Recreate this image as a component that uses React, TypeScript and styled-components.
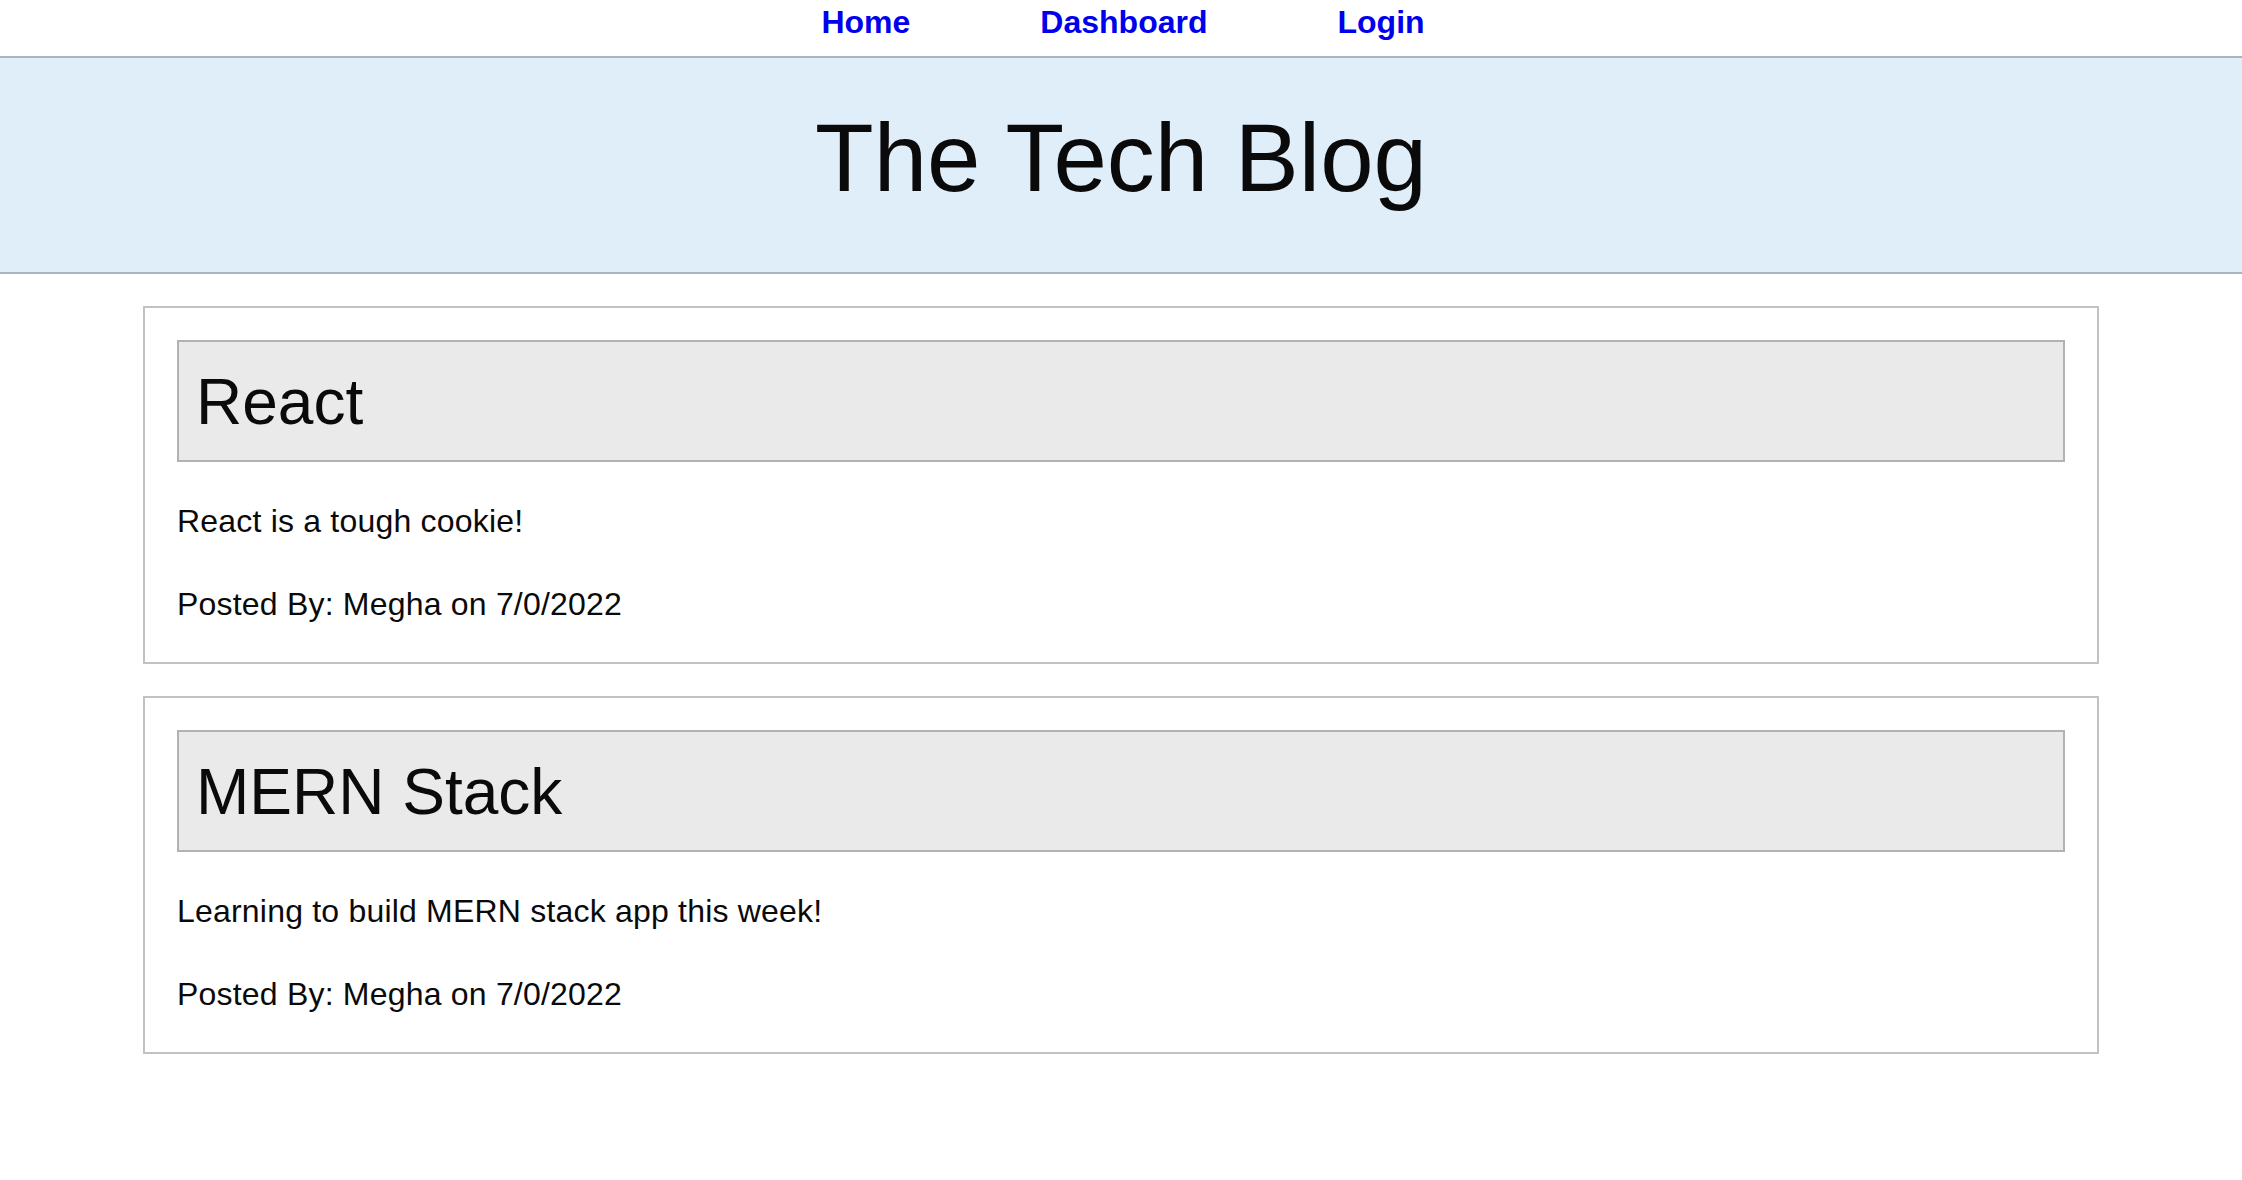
import React from "react";
import styled, { createGlobalStyle } from "styled-components";

const GlobalStyle = createGlobalStyle`
  html, body {
    margin: 0;
    padding: 0;
    background: #ffffff;
  }
  body {
    font-family: "Liberation Sans", Arial, Helvetica, sans-serif;
    color: #0a0a0a;
  }
  * { box-sizing: border-box; }
`;

const Page = styled.div`
  display: flex;
  flex-direction: column;
  min-height: 1180px;
`;

const Nav = styled.nav`
  height: 56px;
  padding-top: 4px;
  padding-left: 4px;
  display: flex;
  justify-content: center;
  align-items: flex-start;
  gap: 130px;
`;

const NavLink = styled.a`
  font-size: 32px;
  line-height: 36px;
  font-weight: 700;
  color: #0000ee;
  text-decoration: none;
  cursor: pointer;
`;

const Header = styled.header`
  height: 218px;
  background: #e0eefa;
  border-top: 2px solid #a9b4bf;
  border-bottom: 2px solid #a9b4bf;
  padding-top: 45px;
  display: flex;
  justify-content: center;
`;

const Title = styled.h1`
  margin: 0;
  font-size: 96px;
  line-height: 110px;
  font-weight: 400;
  color: #0a0a0a;
`;

const Main = styled.main`
  width: 1956px;
  margin: 0 auto;
  padding-top: 32px;
  display: flex;
  flex-direction: column;
  gap: 32px;
`;

const Card = styled.article`
  border: 2px solid #c2c2c2;
  padding: 32px 32px 34px;
  display: flex;
  flex-direction: column;
  gap: 35px;
  background: #ffffff;
`;

const CardTitle = styled.h2`
  margin: 0;
  height: 122px;
  border: 2px solid #b2b2b2;
  background: #eaeaea;
  padding: 3px 17px 0;
  font-size: 64px;
  line-height: 115px;
  font-weight: 400;
  color: #0a0a0a;
`;

const Text = styled.p`
  margin: 0;
  font-size: 32px;
  line-height: 48px;
  letter-spacing: 0.2px;
  color: #0a0a0a;
`;

const posts = [
  {
    title: "React",
    body: "React is a tough cookie!",
    author: "Megha",
    date: "7/0/2022",
  },
  {
    title: "MERN Stack",
    body: "Learning to build MERN stack app this week!",
    author: "Megha",
    date: "7/0/2022",
  },
];

export default function App() {
  return (
    <Page>
      <GlobalStyle />
      <Nav>
        <NavLink href="#">Home</NavLink>
        <NavLink href="#">Dashboard</NavLink>
        <NavLink href="#">Login</NavLink>
      </Nav>
      <Header>
        <Title>The Tech Blog</Title>
      </Header>
      <Main>
        {posts.map((p) => (
          <Card key={p.title}>
            <CardTitle>{p.title}</CardTitle>
            <Text>{p.body}</Text>
            <Text>
              Posted By: {p.author} on {p.date}
            </Text>
          </Card>
        ))}
      </Main>
    </Page>
  );
}
